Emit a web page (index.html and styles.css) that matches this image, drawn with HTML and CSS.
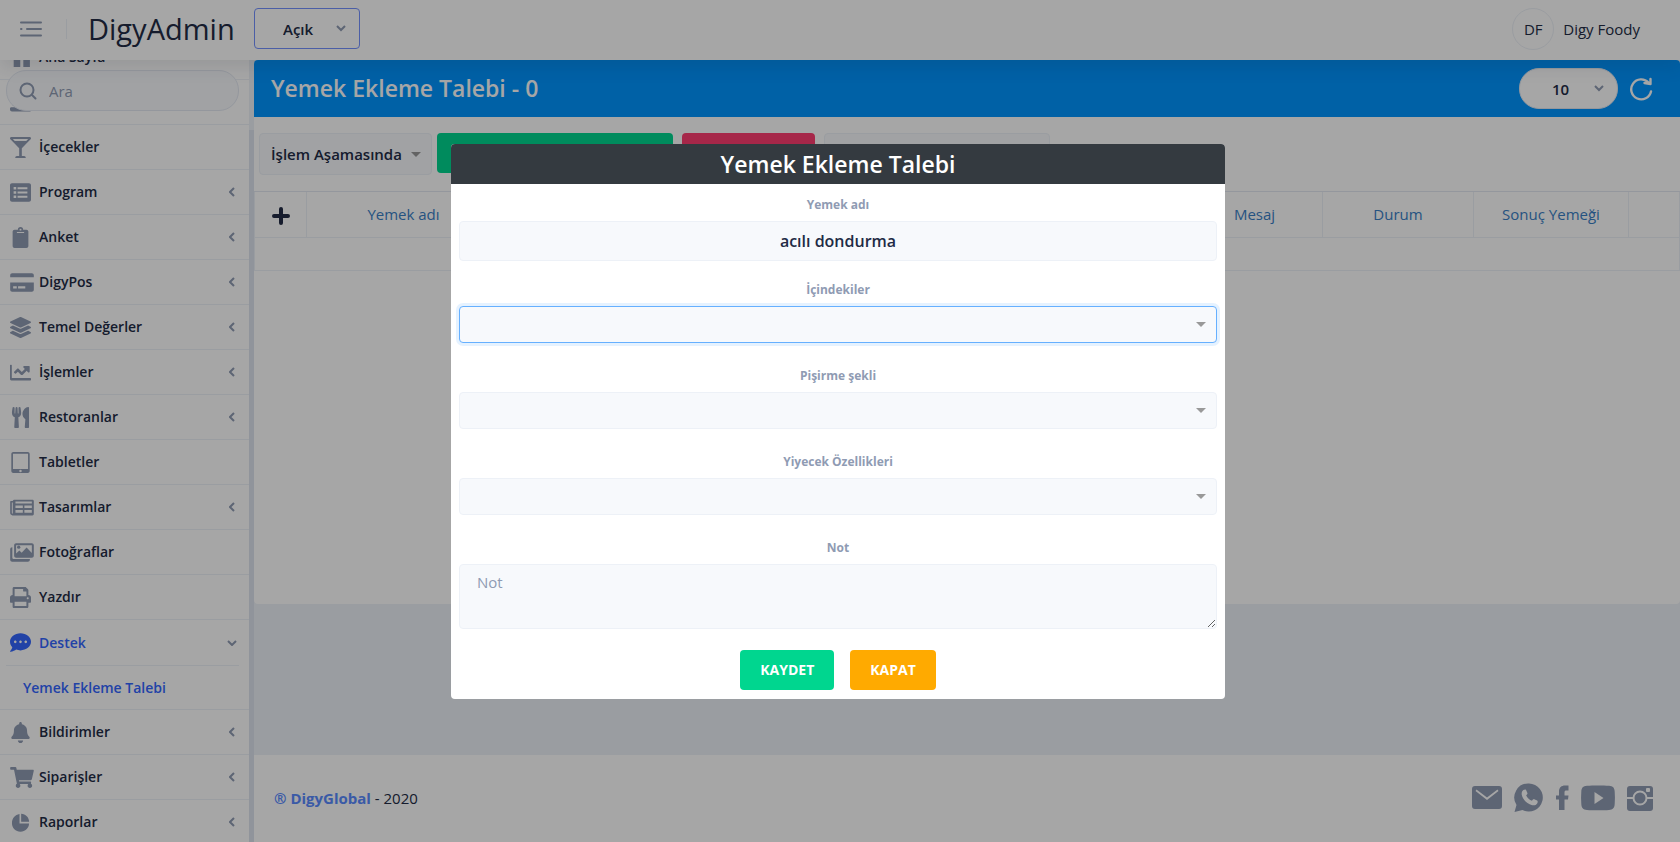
FILE: index.html
```html
<!DOCTYPE html>
<html lang="tr">
<head>
    <meta charset="UTF-8">
    <meta name="viewport" content="width=device-width, initial-scale=1.0">
    <title>DigyAdmin</title>
    <link rel="stylesheet" href="styles.css">
</head>
<body>
    <header class="topbar">
        <button type="button" class="icon-btn menu-toggle" aria-label="Menü">
            <svg width="22" height="16" viewBox="0 0 22 16" fill="none" stroke="currentColor" stroke-width="2" stroke-linecap="round"><path d="M1 1.500h20M7 8h14M1 14.500h20M1 8h.5"/></svg>
        </button>
        <a href="#" class="logo">DigyAdmin</a>
        <div class="select-wrap chevron">
            <select class="status-select" aria-label="Durum"><option>Açık</option></select>
            <svg width="10" height="7" viewBox="0 0 10 7"><path d="M1 1l4 4 4-4"/></svg>
        </div>
        <div class="user">
            <span class="avatar">DF</span>
            <span>Digy Foody</span>
        </div>
    </header>

    <div class="layout">
        <aside class="sidebar">
            <form class="search">
                <svg width="18" height="18" viewBox="0 0 18 18" fill="none" stroke="currentColor" stroke-width="2" stroke-linecap="round"><circle cx="8" cy="8" r="6.500"/><path d="M13 13l3.500 3.500"/></svg>
                <input type="text" placeholder="Ara" aria-label="Ara">
            </form>
            <nav>
                <ul class="menu">
                    <li><a href="#"><svg class="ico" viewBox="0 0 512 512"><path d="M90 60h160v190H90zM325 60h160v190H325zM90 300h160v190H90zM325 300h160v190H325z"/></svg>Ana Sayfa</a></li>
                    <li><a href="#"><svg class="ico" viewBox="0 0 512 512"><path d="M32 370h448c18 0 32 14 32 32v40c0 18-14 32-32 32H48c-26 0-48-22-48-48v-24c0-18 14-32 32-32zM64 330a192 192 0 0 1 384 0z"/></svg>Yiyecekler</a></li>
                    <li><a href="#"><svg class="ico" viewBox="0 0 512 512"><path fill-rule="evenodd" d="M502.05 57.6C523.3 36.34 508.25 0 478.2 0H33.8C3.75 0-11.3 36.34 9.95 57.6L224 271.64V464h-56c-22.09 0-40 17.91-40 40 0 4.42 3.58 8 8 8h240c4.42 0 8-3.58 8-8 0-22.09-17.91-40-40-40h-56V271.64L502.05 57.6zM443.77 48l-48 48H116.24l-48-48h375.53z"/></svg>İçecekler</a></li>
                    <li><a href="#"><svg class="ico" viewBox="0 0 512 512"><path fill-rule="evenodd" d="M48 32h416c26 0 48 22 48 48v352c0 26-22 48-48 48H48c-26 0-48-22-48-48V80c0-26 22-48 48-48zM88 120v64h64v-64zM184 128v48h240v-48zM88 224v64h64v-64zM184 232v48h240v-48zM88 328v64h64v-64zM184 336v48h240v-48z"/></svg>Program<svg class="arrow" viewBox="0 0 6 10"><path d="M5 1L1 5l4 4"/></svg></a></li>
                    <li><a href="#"><svg class="ico" viewBox="0 0 512 512"><path fill-rule="evenodd" d="M112 64h80a64 64 0 0 1 128 0h80c26 0 48 22 48 48v352c0 26-22 48-48 48H112c-26 0-48-22-48-48V112c0-26 22-48 48-48zM256 40a24 24 0 1 0 0 48 24 24 0 0 0 0-48zM168 120v28h176v-28z"/></svg>Anket<svg class="arrow" viewBox="0 0 6 10"><path d="M5 1L1 5l4 4"/></svg></a></li>
                    <li><a href="#"><svg class="ico wide" viewBox="0 0 576 512"><path fill-rule="evenodd" d="M0 432c0 26.500 21.500 48 48 48h480c26.500 0 48-21.500 48-48V256H0v176zM192 350v50h176v-50zM72 350v50h88v-50zM576 80v48H0V80c0-26.500 21.500-48 48-48h480c26.500 0 48 21.500 48 48z"/></svg>DigyPos<svg class="arrow" viewBox="0 0 6 10"><path d="M5 1L1 5l4 4"/></svg></a></li>
                    <li><a href="#"><svg class="ico" viewBox="0 0 512 512"><path d="M12.41 148.02l232.94 105.67c6.8 3.09 14.49 3.09 21.29 0l232.94-105.67c16.55-7.51 16.55-32.52 0-40.03L266.65 2.31a25.607 25.607 0 0 0-21.29 0L12.41 107.98c-16.55 7.51-16.55 32.53 0 40.04zm487.18 88.28l-58.09-26.33-161.64 73.27c-7.56 3.43-15.59 5.17-23.86 5.17s-16.29-1.74-23.86-5.17L70.51 209.97l-58.1 26.33c-16.55 7.5-16.55 32.5 0 40l232.94 105.59c6.8 3.08 14.49 3.08 21.29 0L499.59 276.3c16.55-7.5 16.55-32.5 0-40zm0 127.8l-57.87-26.23-161.86 73.37c-7.56 3.43-15.59 5.17-23.86 5.17s-16.29-1.74-23.86-5.17L70.29 337.87 12.41 364.1c-16.55 7.5-16.55 32.5 0 40l232.94 105.59c6.8 3.08 14.49 3.08 21.29 0L499.59 404.1c16.55-7.5 16.55-32.5 0-40z"/></svg>Temel Değerler<svg class="arrow" viewBox="0 0 6 10"><path d="M5 1L1 5l4 4"/></svg></a></li>
                    <li><a href="#"><svg class="ico" viewBox="0 0 512 512"><path d="M496 392H44V80c0-8.840-7-16-14-16H16C7.160 64 0 71.160 0 80v336c0 17.670 14.330 32 32 32h464c8.840 0 16-7.160 16-16v-24c0-8.840-7.160-16-16-16zM464 96H345.940c-21.380 0-32.090 25.850-16.970 40.970l32.400 32.400L288 242.750l-73.370-73.370c-12.500-12.500-32.760-12.500-45.250 0l-68.690 68.690c-6.250 6.250-6.250 16.380 0 22.630l22.620 22.620c6.250 6.250 16.380 6.250 22.630 0L192 237.250l73.370 73.370c12.500 12.500 32.760 12.500 45.250 0l96-96 32.400 32.400c15.120 15.120 40.970 4.410 40.970-16.970V112c.01-8.840-7.150-16-15.990-16z"/></svg>İşlemler<svg class="arrow" viewBox="0 0 6 10"><path d="M5 1L1 5l4 4"/></svg></a></li>
                    <li><a href="#"><svg class="ico" viewBox="-48 0 512 512"><path d="M207.9 15.2c.8 4.7 16.1 94.5 16.1 128.8 0 52.3-27.8 89.6-68.9 104.6L168 486.7c.7 13.7-10.2 25.3-24 25.3H80c-13.7 0-24.7-11.5-24-25.3l12.9-238.1C27.7 233.6 0 196.2 0 144 0 109.6 15.3 19.900 16.1 15.2 19.3-5.1 61.4-5.4 64 16.3v141.2c1.3 3.4 15.1 3.2 16 0 1.4-25.3 7.900-139.2 8-141.8 3.3-20.8 44.7-20.8 47.900 0 .2 2.7 6.600 116.5 8 141.8.9 3.2 14.8 3.4 16 0V16.3c2.600-21.600 44.8-21.4 48-1.1zm119.2 285.7l-15 185.1c-1.2 14 9.900 26 23.900 26h56c13.3 0 24-10.7 24-24V24c0-13.2-10.7-24-24-24-82.5 0-221.4 178.5-64.9 300.9z"/></svg>Restoranlar<svg class="arrow" viewBox="0 0 6 10"><path d="M5 1L1 5l4 4"/></svg></a></li>
                    <li><a href="#"><svg class="ico" viewBox="0 0 512 512"><path fill-rule="evenodd" d="M80 0h352c26 0 48 22 48 48v416c0 26-22 48-48 48H80c-26 0-48-22-48-48V48C32 22 54 0 80 0zM72 40v372h368V40zM256 432a30 30 0 1 0 0 60 30 30 0 0 0 0-60z"/></svg>Tabletler</a></li>
                    <li><a href="#"><svg class="ico wide" viewBox="0 0 576 512"><path fill-rule="evenodd" d="M112 64h432c18 0 32 14 32 32v320c0 18-14 32-32 32H56c-31 0-56-25-56-56V120c0-13 11-24 24-24h40c0-18 14-32 48-32zM40 136v256c0 20 24 20 24 0V136zM128 112v48h400v-48zM128 208v60h180v-60zM346 208v60h182v-60zM128 314v70h180v-70zM346 314v70h182v-70z"/></svg>Tasarımlar<svg class="arrow" viewBox="0 0 6 10"><path d="M5 1L1 5l4 4"/></svg></a></li>
                    <li><a href="#"><svg class="ico wide" viewBox="0 0 576 512"><path fill-rule="evenodd" d="M480 416v16c0 26-22 48-48 48H48c-26 0-48-22-48-48V176c0-26 22-48 48-48h4v248c0 22 18 40 40 40zM144 32h384c26 0 48 22 48 48v256c0 26-22 48-48 48H144c-26 0-48-22-48-48V80c0-26 22-48 48-48zM144 80v200l80-72 56 52 120-124 128 132V80z"/><circle cx="208" cy="126" r="40"/></svg>Fotoğraflar</a></li>
                    <li><a href="#"><svg class="ico" viewBox="0 0 512 512"><path fill-rule="evenodd" d="M448 192V77.250c0-8.490-3.370-16.620-9.370-22.630L393.370 9.370c-6-6-14.140-9.370-22.630-9.370H96C78.330 0 64 14.330 64 32v160c-35.350 0-64 28.650-64 64v112c0 8.840 7.160 16 16 16h48v96c0 17.670 14.330 32 32 32h320c17.670 0 32-14.330 32-32v-96h48c8.840 0 16-7.160 16-16V256c0-35.350-28.650-64-64-64zm-48 272H112v-104h288v104zm0-240H112V48h208v48c0 8.840 7.160 16 16 16h64v112zm32 72c-13.250 0-24-10.750-24-24 0-13.260 10.750-24 24-24s24 10.740 24 24c0 13.250-10.750 24-24 24z"/></svg>Yazdır</a></li>
                    <li class="open">
                        <a href="#"><svg class="ico" viewBox="0 0 512 512"><path fill-rule="evenodd" d="M256 32C114.600 32 0 125.100 0 240c0 49.600 21.400 95 57 130.700C44.500 421.100 2.700 466 2.200 466.500c-2.200 2.300-2.800 5.700-1.500 8.700S4.800 480 8 480c66.300 0 116-31.800 140.600-51.400 32.700 12.300 69 19.400 107.400 19.400 141.400 0 256-93.100 256-208S397.400 32 256 32zM128 272c-17.700 0-32-14.300-32-32s14.300-32 32-32 32 14.300 32 32-14.300 32-32 32zm128 0c-17.700 0-32-14.300-32-32s14.300-32 32-32 32 14.300 32 32-14.300 32-32 32zm128 0c-17.700 0-32-14.300-32-32s14.300-32 32-32 32 14.300 32 32-14.300 32-32 32z"/></svg>Destek<svg class="arrow down" viewBox="0 0 10 6"><path d="M1 1l4 4 4-4"/></svg></a>
                        <ul class="submenu">
                            <li><a href="#">Yemek Ekleme Talebi</a></li>
                        </ul>
                    </li>
                    <li><a href="#"><svg class="ico" viewBox="-32 0 512 512"><path d="M224 512c35.320 0 63.970-28.650 63.970-64H160.030c0 35.350 28.650 64 63.970 64zm215.390-149.710c-19.320-20.760-55.470-51.990-55.470-154.290 0-77.700-54.480-139.900-127.940-155.160V32c0-17.670-14.320-32-31.980-32s-31.980 14.330-31.980 32v20.840C118.560 68.100 64.080 130.300 64.080 208c0 102.300-36.150 133.530-55.470 154.290-6 6.450-8.660 14.160-8.610 21.710.11 16.400 12.980 32 32.100 32h383.800c19.120 0 32-15.600 32.100-32 .05-7.550-2.610-15.270-8.610-21.710z"/></svg>Bildirimler<svg class="arrow" viewBox="0 0 6 10"><path d="M5 1L1 5l4 4"/></svg></a></li>
                    <li><a href="#"><svg class="ico wide" viewBox="0 0 576 512"><path d="M528.120 301.319l47.273-208C578.806 78.301 567.391 64 551.990 64H159.208l-9.166-44.810C147.758 8.021 137.930 0 126.529 0H24C10.745 0 0 10.745 0 24v16c0 13.255 10.745 24 24 24h69.883l70.248 343.435C147.325 417.100 136 435.222 136 456c0 30.928 25.072 56 56 56s56-25.072 56-56c0-15.674-6.447-29.835-16.824-40h209.647C430.447 426.165 424 440.326 424 456c0 30.928 25.072 56 56 56s56-25.072 56-56c0-22.172-12.888-41.332-31.579-50.405l5.517-24.276c3.413-15.018-8.002-29.319-23.403-29.319H218.117l-6.545-32h293.145c11.206 0 20.920-7.754 23.403-18.681z"/></svg>Siparişler<svg class="arrow" viewBox="0 0 6 10"><path d="M5 1L1 5l4 4"/></svg></a></li>
                    <li><a href="#"><svg class="ico" viewBox="0 0 512 512"><path d="M232 50v230h232c0 112-94 200-208 200C136 480 48 388 48 272 48 152 124 68 232 50zM272 40c108 0 194 90 194 200H272z"/></svg>Raporlar<svg class="arrow" viewBox="0 0 6 10"><path d="M5 1L1 5l4 4"/></svg></a></li>
                </ul>
            </nav>
            <div class="scrollbar"></div>
        </aside>

        <div class="main">
            <main class="card">
                <div class="card-header">
                    <h1>Yemek Ekleme Talebi - 0</h1>
                    <div class="select-wrap chevron">
                        <select class="page-size" aria-label="Sayfa boyutu"><option>10</option></select>
                        <svg width="10" height="7" viewBox="0 0 10 7"><path d="M1 1l4 4 4-4"/></svg>
                    </div>
                    <button type="button" class="icon-btn refresh" aria-label="Yenile">
                        <svg width="24" height="24" viewBox="0 0 24 24" fill="none" stroke="currentColor" stroke-width="2.400" stroke-linecap="round" stroke-linejoin="round"><path d="M22 14.500A10 10 0 1 1 19.500 5.500M21.500 2v5l-6-1"/></svg>
                    </button>
                </div>
                <div class="toolbar">
                    <div class="select-wrap caret">
                        <select class="stage-select" aria-label="İşlem"><option>İşlem Aşamasında</option></select>
                    </div>
                    <button type="button" class="btn success add-btn" aria-label="Ekle"></button>
                    <button type="button" class="btn danger delete-btn" aria-label="Sil"></button>
                    <input type="text" class="filter-input" aria-label="Filtre">
                </div>
                <table class="grid">
                    <colgroup><col class="c-add"><col class="c-name"><col><col class="c-message"><col class="c-status"><col class="c-result"><col class="c-end"></colgroup>
                    <thead>
                        <tr>
                            <th><button type="button" class="icon-btn" aria-label="Yeni"><svg width="18" height="18" viewBox="0 0 18 18" stroke="currentColor" stroke-width="4" stroke-linecap="round"><path d="M9 2v14M2 9h14"/></svg></button></th>
                            <th><a href="#">Yemek adı</a></th>
                            <th></th>
                            <th><a href="#">Mesaj</a></th>
                            <th><a href="#">Durum</a></th>
                            <th><a href="#">Sonuç Yemeği</a></th>
                            <th></th>
                        </tr>
                    </thead>
                    <tbody><tr><td colspan="7"></td></tr></tbody>
                </table>
            </main>
            <footer class="footer">
                <span><a href="#">® DigyGlobal</a> - 2020</span>
                <div class="socials">
                    <a href="#" aria-label="E-posta"><svg width="30" height="24" viewBox="0 0 30 24"><path fill-rule="evenodd" d="M3 0h24a3 3 0 0 1 3 3v17a3 3 0 0 1-3 3H3a3 3 0 0 1-3-3V3a3 3 0 0 1 3-3zM4.500 3.500l-1 1.500L15 14 26.500 5l-1-1.500L15 11.500z"/></svg></a>
                    <a href="#" aria-label="WhatsApp"><svg width="30" height="30" viewBox="0 0 30 30"><path d="M15 .500a14 14 0 1 1-6.500 26.500L.500 29l2-7A14 14 0 0 1 15 .500z"/><path class="cut" transform="translate(4.500 3.500) scale(.88)" d="M5.500 4C6.500 3.500 8 3 8.600 4l1.500 3.500c.3.800-.2 1.400-1.400 2.600 1.500 3 3.800 5 6.600 6.200 1-1.200 1.700-2.300 2.600-1.900l3.300 1.600c1 .600.600 2.200 0 3.200-1 1.800-3.400 2.600-5.600 2C9 19.500 4.800 14.500 3.700 9.500 3.300 7.200 4 5 5.500 4z"/></svg></a>
                    <a href="#" aria-label="Facebook"><svg width="13" height="26" viewBox="0 0 13 26"><path d="M12.500.500v5h-2c-1.500 0-2 .500-2 2v3h4l-.500 4H8.500V25H3V14.500H0v-4h3V6.500C3 2.500 5.500.500 9 .500z"/></svg></a>
                    <a href="#" aria-label="YouTube"><svg width="34" height="26" viewBox="0 0 34 26"><path fill-rule="evenodd" d="M6 .800c6-.500 16-.500 22 0 4 .300 5.500 2 5.700 6 .300 4 .300 8 0 12-.200 4-1.700 6-5.700 6.200-6 .400-16 .400-22 0-4-.200-5.500-2.200-5.700-6.200-.300-4-.300-8 0-12C.500 2.800 2 1.100 6 .800zM13.500 7v12l9-6z"/></svg></a>
                    <a href="#" aria-label="Instagram"><svg width="26" height="26" viewBox="0 0 26 26"><rect y="1" width="26" height="25" rx="3"/><path class="cut" d="M0 12h6v2H0zM20 12h6v2h-6z"/><circle cx="13" cy="13" r="6.500" class="ring"/><rect class="cut" x="19" y="3" width="4" height="4" rx="1"/></svg></a>
                </div>
            </footer>
        </div>
    </div>

    <div class="backdrop">
        <form class="dialog" role="dialog" aria-labelledby="dialogTitle">
            <h2 id="dialogTitle">Yemek Ekleme Talebi</h2>
            <div class="dialog-body">
                <div class="field name-field">
                    <label for="foodName">Yemek adı</label>
                    <input type="text" id="foodName" value="acılı dondurma">
                </div>
                <div class="field">
                    <label for="ingredients">İçindekiler</label>
                    <div class="select-wrap caret"><select id="ingredients" class="focused"><option></option></select></div>
                </div>
                <div class="field">
                    <label for="cooking">Pişirme şekli</label>
                    <div class="select-wrap caret"><select id="cooking"><option></option></select></div>
                </div>
                <div class="field">
                    <label for="features">Yiyecek Özellikleri</label>
                    <div class="select-wrap caret"><select id="features"><option></option></select></div>
                </div>
                <div class="field">
                    <label for="note">Not</label>
                    <textarea id="note" placeholder="Not"></textarea>
                </div>
                <div class="actions">
                    <button type="button" class="btn success">KAYDET</button>
                    <button type="button" class="btn warning">KAPAT</button>
                </div>
            </div>
        </form>
    </div>
</body>
</html>
```

FILE: styles.css
```css
* {
    box-sizing: border-box;
}
body {
    margin: 0;
    height: 100vh;
    display: flex;
    flex-direction: column;
    overflow: hidden;
    font-family: "Open Sans", sans-serif;
    font-size: 15px;
    line-height: 24px;
    color: #222b45;
    background-color: #edf1f7;
}
a {
    color: inherit;
    text-decoration: none;
}
ul {
    list-style: none;
    margin: 0;
    padding: 0;
}
input, select, textarea, button {
    font-family: inherit;
    font-size: 15px;
    line-height: 24px;
    color: inherit;
}
.icon-btn {
    display: inline-flex;
    padding: 0;
    border: none;
    background: none;
    cursor: pointer;
}

/* Top bar */
.topbar {
    position: relative;
    z-index: 2;
    flex: none;
    height: 60px;
    padding: 0 40px 3px 20px;
    display: flex;
    align-items: center;
    background-color: #fff;
    box-shadow: 0 8px 16px rgba(44, 51, 73, 0.1);
}
.menu-toggle {
    color: #8f9bb3;
}
.logo {
    margin-left: 24px;
    padding-left: 21px;
    width: 188px;
    border-left: 1px solid #edf1f7;
    font-size: 29px;
    line-height: 20px;
}

/* Selects */
.select-wrap {
    position: relative;
}
.select-wrap select {
    appearance: none;
    cursor: pointer;
}
.chevron svg {
    position: absolute;
    right: 14px;
    top: 17px;
    fill: none;
    stroke: #8f9bb3;
    stroke-width: 2;
    pointer-events: none;
}
.caret::after {
    content: "";
    position: absolute;
    right: 11px;
    top: calc(50% - 2px);
    border: 5px solid transparent;
    border-top-color: #999;
    border-bottom: none;
    pointer-events: none;
}
.status-select {
    width: 106px;
    height: 41px;
    padding: 0 28px;
    border: 1px solid #7391ff;
    border-radius: 4px;
    background-color: #fff;
    font-weight: 600;
}
.user {
    margin-left: auto;
    display: flex;
    align-items: center;
    gap: 9px;
}
.avatar {
    width: 42px;
    height: 42px;
    border: 1px solid #edf1f7;
    border-radius: 50%;
    line-height: 40px;
    text-align: center;
}

.layout {
    flex: 1;
    min-height: 0;
    display: flex;
}

/* Sidebar */
.sidebar {
    position: relative;
    flex: none;
    width: 254px;
    overflow: hidden;
    background-color: #fff;
}
.search {
    position: absolute;
    z-index: 1;
    top: 10px;
    left: 6px;
    right: 15px;
    height: 41px;
    padding: 0 12px;
    display: flex;
    align-items: center;
    gap: 12px;
    border: 1px solid #e4e9f2;
    border-radius: 20px;
    background-color: #f7f9fc;
    color: #8f9bb3;
}
.search svg {
    flex: none;
}
.search input {
    width: 100%;
    padding: 0;
    border: none;
    background: none;
}
.search input::placeholder {
    color: #8f9bb3;
}
.menu {
    margin-top: -25px; /* list is scrolled down a little */
    margin-right: 5px;
    font-size: 14px;
    font-weight: 600;
}
.menu a {
    display: flex;
    align-items: center;
    height: 45px;
    padding: 0 14px 0 10px;
    border-bottom: 1px solid #edf1f7;
}
.ico {
    flex: none;
    width: 21px;
    height: 21px;
    margin-right: 8px;
    fill: #8f9bb3;
}
.ico.wide {
    width: 24px;
    margin-right: 5px;
}
.arrow {
    width: 6px;
    height: 10px;
    margin-left: auto;
    fill: none;
    stroke: #8f9bb3;
    stroke-width: 2;
}
.arrow.down {
    width: 10px;
    height: 6px;
    margin-right: -2px;
}
.menu .open > a {
    color: #3366ff;
    border-bottom: none;
}
.menu .open .ico {
    fill: #3366ff;
}
.submenu {
    margin: 0 10px 0 6px;
    border-top: 1px solid #edf1f7;
}
.menu .submenu a {
    height: 43px;
    padding-left: 17px;
    border-bottom: none;
    color: #3366ff;
}
.open {
    border-bottom: 1px solid #edf1f7;
}
.scrollbar {
    position: absolute;
    top: 0;
    right: 0;
    bottom: 0;
    width: 5px;
    background: linear-gradient(#edf1f7 70px, #dde3ee 70px);
}

/* Content card */
.main {
    flex: 1;
    min-width: 0;
    display: flex;
    flex-direction: column;
}
.card {
    flex: 1;
    margin-bottom: 151px;
    border-radius: 4px;
    background-color: #fff;
}
.card-header {
    display: flex;
    align-items: center;
    height: 57px;
    padding: 0 27px 0 17px;
    border-radius: 4px 4px 0 0;
    background-color: #0095ff;
    color: #fff;
}
.card-header h1 {
    margin: 0 auto 0 0;
    padding-bottom: 2px;
    font-size: 23px;
    font-weight: 600;
}
.page-size {
    width: 99px;
    height: 41px;
    padding: 0 32px;
    border: 1px solid #e4e9f2;
    border-radius: 20px;
    background-color: #fff;
    color: #222b45;
    font-weight: 600;
}
.refresh {
    margin-left: 11px;
}
.toolbar {
    display: flex;
    align-items: flex-start;
    gap: 9px;
    height: 75px;
    padding: 16px 5px;
    border-bottom: 1px solid #e4e9f2;
}
.stage-select {
    width: 173px;
    height: 42px;
    padding: 0 11px;
    border: 1px solid #edf1f7;
    border-radius: 4px;
    background-color: #f7f9fc;
    font-weight: 600;
}
.btn {
    height: 40px;
    padding: 0 20px;
    border: none;
    border-radius: 4px;
    color: #fff;
    font-size: 14px;
    font-weight: 700;
    cursor: pointer;
}
.success {
    background-color: #00d68f;
}
.danger {
    background-color: #ff3d71;
}
.warning {
    background-color: #ffaa00;
}
.add-btn {
    width: 236px;
    margin-left: -4px;
}
.delete-btn {
    width: 133px;
}
.filter-input {
    width: 226px;
    height: 40px;
    border: 1px solid #edf1f7;
    border-radius: 4px;
    background-color: #f7f9fc;
}
.grid {
    width: 100%;
    table-layout: fixed;
    border-collapse: collapse;
}
.grid th, .grid td {
    height: 45px;
    padding: 0;
    border: 1px solid #edf1f7;
    border-top: none;
    font-weight: 400;
    text-align: center;
    vertical-align: middle;
}
.grid td {
    height: 33px;
}
.grid th a {
    color: #3a80c6;
}
.grid .icon-btn {
    vertical-align: middle;
}
.c-add {
    width: 52px;
}
.c-name {
    width: 194px;
}
.c-message {
    width: 136px;
}
.c-status {
    width: 151px;
}
.c-result {
    width: 155px;
}
.c-end {
    width: 51px;
}

/* Footer */
.footer {
    flex: none;
    display: flex;
    align-items: center;
    justify-content: space-between;
    height: 87px;
    padding: 0 27px 1px 20px;
    background-color: #fff;
}
.footer span a {
    color: #598bff;
    font-weight: 700;
}
.socials {
    display: flex;
    align-items: center;
    gap: 12px;
}
.socials a {
    display: flex;
}
.socials svg {
    fill: #8f9bb3;
}
.socials .cut {
    fill: #fff;
}
.socials .ring {
    stroke: #fff;
    stroke-width: 2;
}

/* Dialog */
.backdrop {
    position: fixed;
    inset: 0;
    z-index: 10;
    display: flex;
    align-items: center;
    justify-content: center;
    padding-right: 4px;
    background-color: rgba(0, 0, 0, 0.35);
}
.dialog {
    width: 774px;
    border-radius: 4px;
    overflow: hidden;
    background-color: #fff;
}
.dialog h2 {
    margin: 0;
    font-size: 23px;
    line-height: 40px;
    font-weight: 600;
    text-align: center;
    color: #fff;
    background-color: #343a40;
}
.dialog-body {
    padding: 9px 8px;
}
.field {
    margin-bottom: 21px;
}
.name-field {
    margin-bottom: 17px;
}
.field label {
    display: block;
    height: 28px;
    font-size: 12px;
    font-weight: 700;
    text-align: center;
    color: #8f9bb3;
}
.field input, .field select, .field textarea {
    display: block;
    width: 100%;
    height: 37px;
    border: 1px solid #edf1f7;
    border-radius: 4px;
    background-color: #f7f9fc;
}
.field input {
    height: 40px;
    padding-top: 2px;
    text-align: center;
    font-size: 16px;
    font-weight: 600;
}
.field select.focused {
    border-color: #66b0ff;
    box-shadow: 0 0 0 3px rgba(0, 123, 255, 0.1);
}
.field textarea {
    height: 65px;
    padding: 5px 17px;
    resize: vertical;
}
.field textarea::placeholder {
    color: #8f9bb3;
}
.actions {
    display: flex;
    justify-content: center;
    gap: 16px;
}
```
